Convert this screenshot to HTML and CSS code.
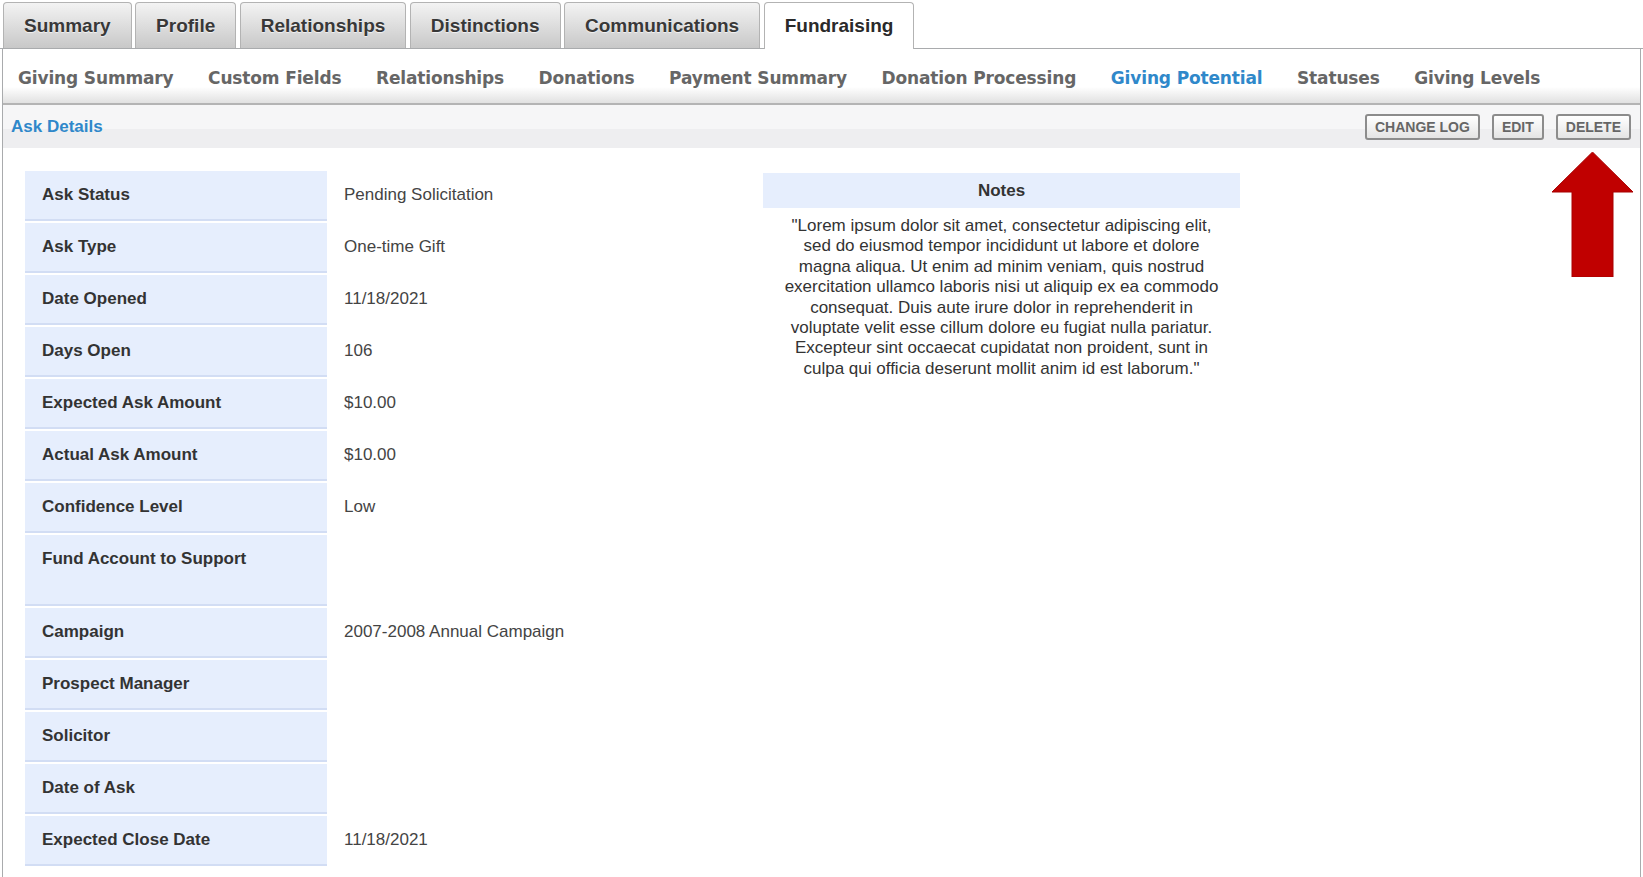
FILE: index.html
```html
<!DOCTYPE html>
<html>

<head>
    <title>Ask Details</title>
    <meta charset="UTF-8">
    <link rel="stylesheet" href="styles.css">
</head>

<body>
    <ul class="tabs">
        <li class="tab">Summary</li>
        <li class="tab">Profile</li>
        <li class="tab">Relationships</li>
        <li class="tab">Distinctions</li>
        <li class="tab">Communications</li>
        <li class="tab active">Fundraising</li>
    </ul>

    <div class="panel">
        <ul class="subnav">
            <li>Giving Summary</li>
            <li>Custom Fields</li>
            <li>Relationships</li>
            <li>Donations</li>
            <li>Payment Summary</li>
            <li>Donation Processing</li>
            <li class="current">Giving Potential</li>
            <li>Statuses</li>
            <li>Giving Levels</li>
        </ul>

        <div class="bar">
            <span class="bar-title">Ask Details</span>
            <div class="actions">
                <button>CHANGE LOG</button>
                <button>EDIT</button>
                <button>DELETE</button>
            </div>
        </div>

        <div class="content">
            <table class="details">
                <tr><th>Ask Status</th><td>Pending Solicitation</td></tr>
                <tr><th>Ask Type</th><td>One-time Gift</td></tr>
                <tr><th>Date Opened</th><td>11/18/2021</td></tr>
                <tr><th>Days Open</th><td>106</td></tr>
                <tr><th>Expected Ask Amount</th><td>$10.00</td></tr>
                <tr><th>Actual Ask Amount</th><td>$10.00</td></tr>
                <tr><th>Confidence Level</th><td>Low</td></tr>
                <tr class="tall"><th>Fund Account to Support</th><td></td></tr>
                <tr><th>Campaign</th><td>2007-2008 Annual Campaign</td></tr>
                <tr><th>Prospect Manager</th><td></td></tr>
                <tr><th>Solicitor</th><td></td></tr>
                <tr><th>Date of Ask</th><td></td></tr>
                <tr><th>Expected Close Date</th><td>11/18/2021</td></tr>
            </table>

            <div class="notes">
                <div class="notes-head">Notes</div>
                <p>"Lorem ipsum dolor sit amet, consectetur adipiscing elit, sed do eiusmod tempor incididunt ut labore et dolore magna aliqua. Ut enim ad minim veniam, quis nostrud exercitation ullamco laboris nisi ut aliquip ex ea commodo consequat. Duis aute irure dolor in reprehenderit in voluptate velit esse cillum dolore eu fugiat nulla pariatur. Excepteur sint occaecat cupidatat non proident, sunt in culpa qui officia deserunt mollit anim id est laborum."</p>
            </div>

            <!-- pointer to the delete button -->
            <svg class="arrow" width="81" height="125" viewBox="0 0 81 125">
                <polygon points="40.5,0 81,40 61,40 61,125 20,125 20,40 0,40" fill="#c00000" stroke="#a80000" stroke-width="1"/>
            </svg>
        </div>
    </div>
</body>

</html>
```

FILE: styles.css
```css
:root {
    --label-bg: #e6eefd;
    --label-line: #d2ddf4;
    --link-blue: #2f88ca;
    --frame: #a9abad;
}

body {
    margin: 0;
    font-family: "Liberation Sans", Arial, sans-serif;
    color: #333;
    background: #fff;
}

ul {
    list-style: none;
    margin: 0;
    padding: 0;
}

/* top tabs */
.tabs {
    display: flex;
    align-items: flex-end;
    gap: 3.5px;
    padding: 2px 0 0 3px;
    border-bottom: 1px solid var(--frame);
}

.tab {
    height: 45px;
    line-height: 45px;
    padding: 0 20px;
    border: 1px solid #b3b3b3;
    border-bottom: none;
    border-radius: 4px 4px 0 0;
    background: linear-gradient(#f3f3f3, #c8c8c8);
    font-size: 19px;
    font-weight: bold;
    color: #383838;
    text-shadow: 0 1px 1px rgba(255, 255, 255, 0.7);
}

.tab.active {
    background: #fff;
    height: 46px;
    margin-bottom: -1px;
    color: #2a2a2a;
}

.panel {
    margin: 0 2px;
    border-left: 1px solid var(--frame);
    border-right: 1px solid var(--frame);
    min-height: 830px;
}

/* second level nav */
.subnav {
    display: flex;
    height: 56px;
    align-items: center;
    padding: 4px 0 0 15px;
    box-sizing: border-box;
    border-bottom: 2px solid #b4b4b4;
    background: linear-gradient(#fff 0, #fff 70%, #e1e1e1 100%);
}

.subnav li {
    margin-right: 34.6px;
    font-family: "DejaVu Sans", Verdana, sans-serif;
    font-weight: bold;
    font-size: 17px;
    letter-spacing: -0.15px;
    color: #666;
}

.subnav li.current {
    color: var(--link-blue);
}

/* title bar */
.bar {
    display: flex;
    justify-content: space-between;
    align-items: center;
    height: 43px;
    padding: 0 9px 0 8px;
    background: linear-gradient(#f6f6f7 0, #f6f6f7 55%, #eeeef0 55%, #eeeef0 100%);
}

.bar-title {
    font-size: 17px;
    font-weight: bold;
    color: var(--link-blue);
}

.actions {
    display: flex;
    gap: 12px;
}

.actions button {
    height: 26px;
    padding: 0 8px;
    border: 2px solid #8c8c8c;
    border-radius: 3px;
    background: linear-gradient(#ffffff, #e4e4e4);
    font-family: "Liberation Sans", Arial, sans-serif;
    font-size: 14px;
    font-weight: bold;
    color: #666;
}

/* body */
.content {
    position: relative;
    display: flex;
    align-items: flex-start;
    padding: 21px 0 0 22px;
}

.details {
    width: 738px;
    border-collapse: separate;
    border-spacing: 0 2px;
    font-size: 17px;
    line-height: 18px;
}

.details th,
.details td {
    text-align: left;
    vertical-align: top;
    padding: 15px 16px 15px 17px;
}

.details th {
    width: 269px;
    background: var(--label-bg);
    border-bottom: 2px solid var(--label-line);
    font-weight: bold;
    color: #333;
}

.details td {
    color: #444;
}

.details tr.tall th {
    padding-bottom: 36px;
}

.notes {
    width: 477px;
    margin-top: 4px;
}

.notes-head {
    height: 35px;
    line-height: 35px;
    text-align: center;
    background: var(--label-bg);
    font-size: 17px;
    font-weight: bold;
}

.notes p {
    margin: 8px 0 0;
    padding: 0 17px;
    text-align: center;
    font-size: 17px;
    line-height: 20.4px;
    color: #333;
}

.arrow {
    position: absolute;
    top: 4px;
    right: 7px;
}
```
